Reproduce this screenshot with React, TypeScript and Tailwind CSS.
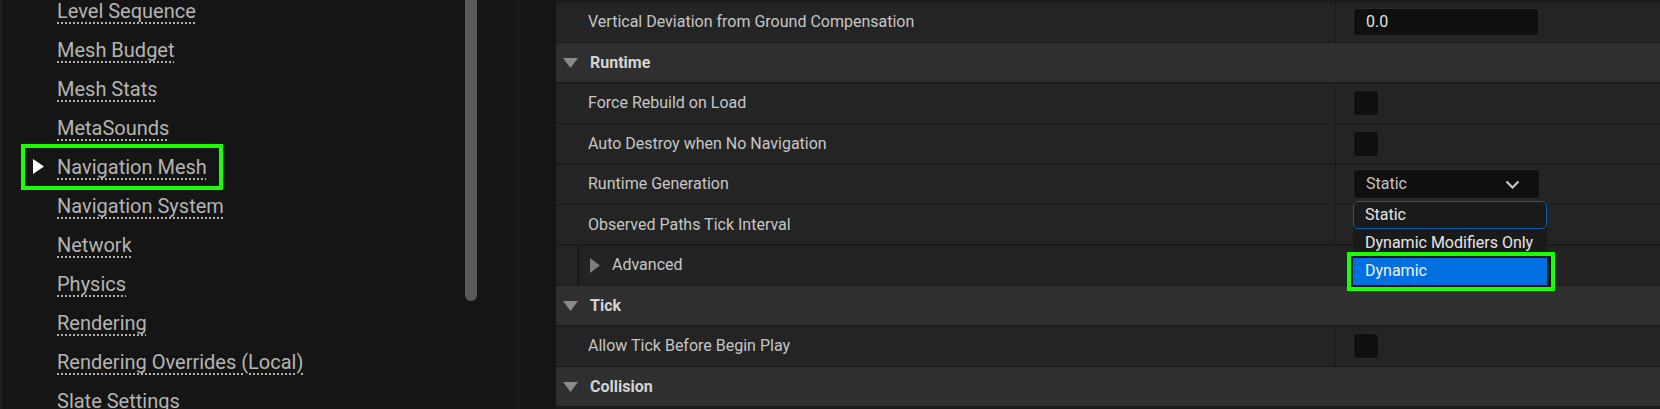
import React from "react";

// ── Data ──────────────────────────────────────────────────────────────────────

const sections = [
  "Level Sequence",
  "Mesh Budget",
  "Mesh Stats",
  "MetaSounds",
  "Navigation Mesh",
  "Navigation System",
  "Network",
  "Physics",
  "Rendering",
  "Rendering Overrides (Local)",
  "Slate Settings",
];

type Row =
  | { kind: "header"; label: string }
  | { kind: "number"; label: string; value: string }
  | { kind: "check"; label: string }
  | { kind: "combo"; label: string; value: string }
  | { kind: "empty"; label: string }
  | { kind: "advanced"; label: string };

const rows: Row[] = [
  { kind: "number", label: "Vertical Deviation from Ground Compensation", value: "0.0" },
  { kind: "header", label: "Runtime" },
  { kind: "check", label: "Force Rebuild on Load" },
  { kind: "check", label: "Auto Destroy when No Navigation" },
  { kind: "combo", label: "Runtime Generation", value: "Static" },
  { kind: "empty", label: "Observed Paths Tick Interval" },
  { kind: "advanced", label: "Advanced" },
  { kind: "header", label: "Tick" },
  { kind: "check", label: "Allow Tick Before Begin Play" },
  { kind: "header", label: "Collision" },
];

// ── Icons ─────────────────────────────────────────────────────────────────────

function TriDown() {
  return (
    <svg width="15" height="10" viewBox="0 0 15 10" className="shrink-0">
      <polygon points="0,0 15,0 7.5,10" fill="#8a8a8a" />
    </svg>
  );
}

function TriRight({ color = "#7c7c7c", w = 10, h = 15 }: { color?: string; w?: number; h?: number }) {
  return (
    <svg width={w} height={h} viewBox={`0 0 ${w} ${h}`} className="shrink-0">
      <polygon points={`0,0 ${w},${h / 2} 0,${h}`} fill={color} />
    </svg>
  );
}

function Chevron() {
  return (
    <svg width="15" height="9" viewBox="0 0 15 9" className="shrink-0">
      <polyline points="1.5,1.5 7.5,7.5 13.5,1.5" fill="none" stroke="#c4c4c4" strokeWidth="2.2" />
    </svg>
  );
}

// ── Value cells ───────────────────────────────────────────────────────────────

function ValueCell({ row }: { row: Row }) {
  if (row.kind === "number") {
    return (
      <div className="h-[28px] w-[186px] rounded-[4px] border border-[#2a2a2a] bg-[#0f0f0f] pl-[12px] flex items-center text-[16px] text-[#e4e4e4]">
        {row.value}
      </div>
    );
  }
  if (row.kind === "check") {
    return <div className="h-[26px] w-[26px] rounded-[4px] border border-[#2a2a2a] bg-[#0f0f0f]" />;
  }
  if (row.kind === "combo") {
    return (
      <div className="relative">
        <div className="h-[30px] w-[187px] rounded-[4px] border border-[#2a2a2a] bg-[#0f0f0f] pl-[12px] pr-[19px] flex items-center justify-between text-[16px] text-[#c4c4c4]">
          <span>{row.value}</span>
          <Chevron />
        </div>
        {/* open dropdown */}
        <div className="absolute left-0 top-[32px] z-10 w-[194px] bg-[#1a1a1a] text-[16px] text-[#e6e6e6]">
          <div className="h-[28px] rounded-[5px] border-[1.5px] border-[#0d5cb0] pl-[11px] flex items-center">
            Static
          </div>
          <div className="h-[28px] pl-[12px] flex items-center">Dynamic Modifiers Only</div>
          <div className="relative h-[28px] bg-[#0070e0] pl-[12px] flex items-center text-[#f2f2f2]">
            Dynamic
            <div className="absolute -left-[6px] -right-[8px] -top-[5px] -bottom-[6px] border-4 border-[#1cff00] shadow-[inset_0_0_0_2px_#141414]" />
          </div>
        </div>
      </div>
    );
  }
  return null;
}

// ── Detail rows ───────────────────────────────────────────────────────────────

function DetailRow({ row }: { row: Row }) {
  if (row.kind === "header") {
    return (
      <div className="h-[39px] bg-[#2f2f2f] flex items-center pl-[7px] gap-[12px]">
        <TriDown />
        <span className="text-[16px] font-bold text-[#d4d4d4]">{row.label}</span>
      </div>
    );
  }
  if (row.kind === "advanced") {
    return (
      <div className="h-[39px] bg-[#232323] flex">
        <div className="w-[21px] bg-[#242424]" />
        <div className="w-[3px] bg-[#1b1b1b]" />
        <div className="flex-1 flex items-center pl-[10px] gap-[12px]">
          <TriRight />
          <span className="text-[16px] text-[#c6c6c6]">{row.label}</span>
        </div>
      </div>
    );
  }
  return (
    <div className="h-[39px] bg-[#242424] flex">
      <div className="w-[780px] flex items-center pl-[32px] text-[16px] text-[#c6c6c6] border-r border-[#1b1b1b]">
        {row.label}
      </div>
      <div className="flex-1 flex items-center pl-[17px]">
        <ValueCell row={row} />
      </div>
    </div>
  );
}

// ── Page ──────────────────────────────────────────────────────────────────────

export default function App() {
  return (
    <div
      className="h-[409px] w-[1660px] overflow-hidden bg-[#151515] flex"
      style={{ fontFamily: "Roboto, 'Noto Sans', sans-serif" }}
    >
      {/* Settings section list */}
      <div className="w-[516px] h-full border-l-2 border-[#1f1f1f] flex">
        <div className="w-[463px] -mt-[9px] flex flex-col">
          {sections.map((s) => (
            <div key={s} className="relative h-[39px] shrink-0 flex items-center">
              {s === "Navigation Mesh" && (
                <>
                  <div className="absolute left-[31px] top-[12px]">
                    <TriRight color="#ffffff" w={11} h={15} />
                  </div>
                  <div className="absolute left-[19px] top-[-3px] w-[202px] h-[46px] border-4 border-[#1cff00]" />
                </>
              )}
              <span className="ml-[55px] text-[20px] leading-[24px] text-[#b4b4b4] underline decoration-dotted decoration-[#b0b0b0] underline-offset-[5px]">
                {s}
              </span>
            </div>
          ))}
        </div>
        {/* scrollbar */}
        <div className="w-[12px] h-[301px] rounded-b-full bg-[#5a5a5a]" />
      </div>
      <div className="w-[4px] h-full bg-[#1b1b1b]" />
      <div className="w-[36px] h-full bg-[#151515]" />

      {/* Details panel */}
      <div className="flex-1 h-full bg-[#1b1b1b] pt-[2.5px] flex flex-col gap-[1.5px]">
        {rows.map((r) => (
          <DetailRow key={r.label} row={r} />
        ))}
      </div>
    </div>
  );
}
